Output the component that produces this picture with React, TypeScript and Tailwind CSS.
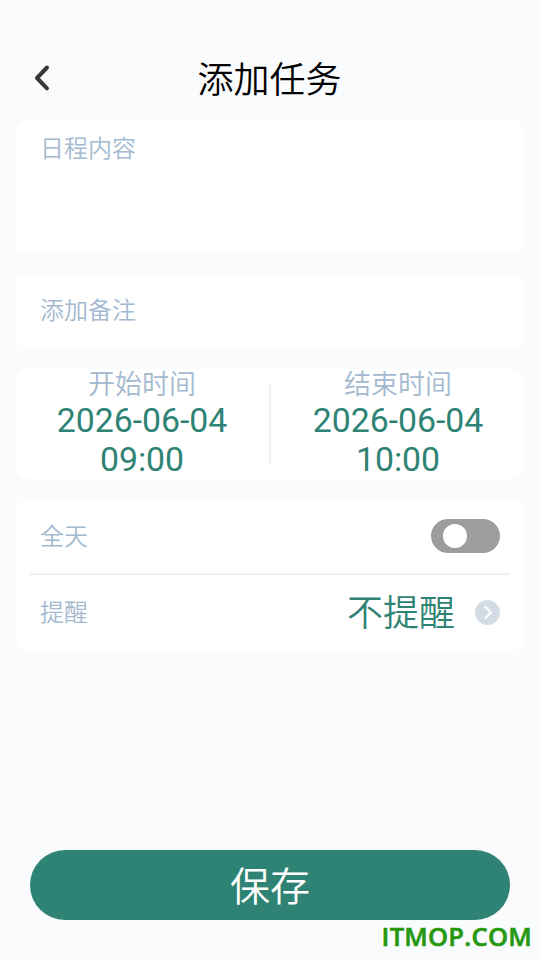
import React from "react";

const Stamp = ({ label, date, time }: { label: string; date: string; time: string }) => (
  <div className="flex flex-1 flex-col items-center">
    <div className="h-[32px] pt-[2px] text-[27px] leading-[28px] font-[350] text-[#a3b9d0]">{label}</div>
    <div className="h-[39px] text-[33.8px] leading-[39px] text-[#2f8374]">{date}</div>
    <div className="h-[39px] text-[33.8px] leading-[39px] text-[#2f8374]">{time}</div>
  </div>
);

export default function App() {
  return (
    <div className="flex h-[960px] w-[540px] flex-col overflow-hidden bg-[#fafbfd] px-[15px] font-[Roboto,'Noto_Sans_CJK_SC',sans-serif]">
      <header className="grid h-[120px] shrink-0 grid-cols-[60px_1fr_60px] items-center pt-[36px]">
        <svg className="ml-[17px] h-[30px] w-[20px]" viewBox="0 0 20 30" fill="none" stroke="#383838" strokeWidth="4" strokeLinecap="round" strokeLinejoin="round">
          <path d="M15 4.5 5 15 15 25.3" />
        </svg>
        <h1 className="pt-[6px] pr-px text-center text-[36px] leading-[52px] font-[350] text-black">添加任务</h1>
      </header>
      <section className="h-[134px] shrink-0 rounded-[15px] bg-white px-[25px] pt-[11px] text-[24px] leading-[36px] font-[350] text-[#a3b9d0]">日程内容</section>
      <section className="mt-[20px] h-[75px] shrink-0 rounded-[15px] bg-white px-[25px] pt-[19px] text-[24px] leading-[36px] font-[350] text-[#a3b9d0]">添加备注</section>
      <section className="mt-[20px] flex h-[110px] shrink-0 rounded-[15px] bg-white">
        <Stamp label="开始时间" date="2026-06-04" time="09:00" />
        <div className="mt-[14px] h-[82px] w-[2px] bg-[#eeeff0]" />
        <Stamp label="结束时间" date="2026-06-04" time="10:00" />
      </section>
      <section className="mt-[20px] h-[152px] shrink-0 rounded-[15px] bg-white px-[15px]">
        <div className="flex h-[76px] items-center justify-between border-b-2 border-[#eeeff0] px-[10px] text-[24px] font-[350] text-[#a3b9d0]">
          <span className="pt-[2px]">全天</span>
          <span className="flex h-[34px] w-[69px] items-center rounded-full bg-[#9d9d9d] pl-[12px]">
            <span className="size-[24px] rounded-full bg-white" />
          </span>
        </div>
        <div className="flex h-[75px] items-center px-[10px] text-[24px] font-[350] text-[#a3b9d0]">
          <span className="pt-[1px]">提醒</span>
          <span className="ml-auto pt-[3px] text-[36px] leading-[52px] text-[#2f8374]">不提醒</span>
          <svg className="ml-[20px] size-[25px]" viewBox="0 0 25 25" fill="none">
            <circle cx="12.5" cy="12.5" r="12.5" fill="#d3dce4" />
            <path d="m10.5 7 5.5 5.5-5.5 5.5" stroke="white" strokeWidth="2" strokeLinecap="round" strokeLinejoin="round" />
          </svg>
        </div>
      </section>
      <button className="mx-[15px] mt-[199px] h-[70px] shrink-0 rounded-full bg-[#2f8374] pt-[6px] text-[40px] leading-[64px] font-[350] text-white">保存</button>
      <div className="mr-[-7px] self-end font-['Open_Sans',sans-serif] text-[25.5px] leading-[32px] font-semibold tracking-[0.25px] text-[#25980f] [-webkit-text-stroke:0.6px_#25980f]">ITMOP.COM</div>
    </div>
  );
}
